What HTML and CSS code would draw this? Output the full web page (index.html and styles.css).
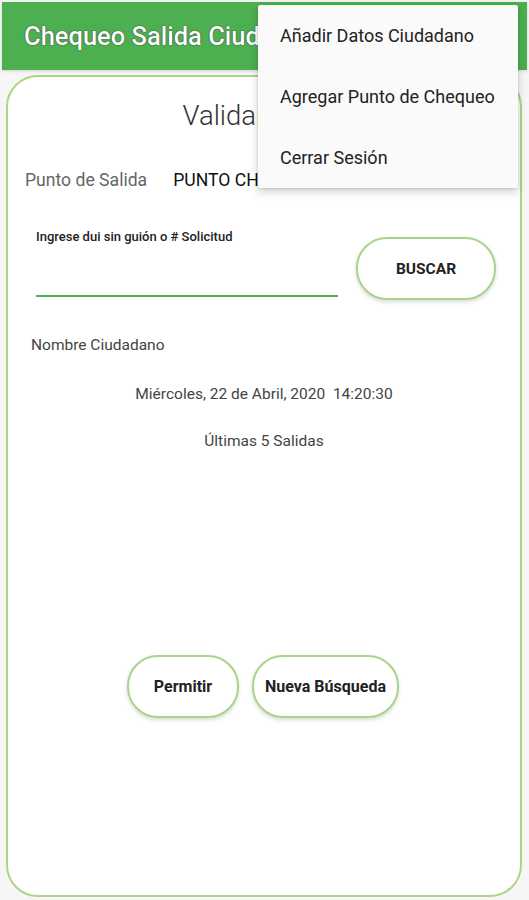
FILE: index.html
```html
<!DOCTYPE html>
<html lang="es">
<head>
  <meta charset="UTF-8" />
  <title>Chequeo Salida Ciudadano</title>
  <meta name="viewport" content="width=device-width, initial-scale=1.0" />
  <link rel="stylesheet" href="styles.css">
</head>
<body>
  <header class="app-bar">
    <h1 class="app-title">Chequeo Salida Ciudadano</h1>
  </header>

  <ul class="menu">
    <li>Añadir Datos Ciudadano</li>
    <li>Agregar Punto de Chequeo</li>
    <li>Cerrar Sesión</li>
  </ul>

  <main class="card">
    <h2 class="card-title">Validar Salida</h2>

    <div class="point-row">
      <span class="point-label">Punto de Salida</span>
      <span class="point-value">PUNTO CHEQUEO 1</span>
    </div>

    <div class="search-row">
      <div class="field">
        <label for="dui" class="field-label">Ingrese dui sin guión o # Solicitud</label>
        <input id="dui" class="field-input" type="text">
      </div>
      <button class="pill btn-search">BUSCAR</button>
    </div>

    <p class="citizen">Nombre Ciudadano</p>
    <p class="date">Miércoles, 22 de Abril, 2020&nbsp;&nbsp;14:20:30</p>
    <p class="last">Últimas 5 Salidas</p>

    <div class="actions">
      <button class="pill btn-allow">Permitir</button>
      <button class="pill btn-new">Nueva Búsqueda</button>
    </div>
  </main>
</body>
</html>
```

FILE: styles.css
```css
body {
  margin: 0;
  font-family: Roboto, 'Noto Sans', sans-serif;
  background: #f6f6f6;
  color: #333;
  position: relative;
  height: 900px;
  overflow: hidden;
}

.app-bar {
  margin: 2px 2px 0;
  height: 68px;
  background: #4caf50;
  display: flex;
  align-items: center;
  padding-left: 22px;
  box-shadow: 0 1px 3px rgba(0,0,0,0.15);
}

.app-title {
  margin: 0;
  color: #fff;
  font-size: 25.5px;
  font-weight: 500;
  white-space: nowrap;
  text-shadow: 0 0 1px #333, 0 0 1px #333;
}

/* overflow menu, open over the bar and the card */
.menu {
  position: absolute;
  top: 5px;
  left: 258px;
  width: 260px;
  margin: 0;
  padding: 0;
  list-style: none;
  background: #fafafa;
  box-shadow: 0 4px 10px rgba(0,0,0,0.18), 0 1px 3px rgba(0,0,0,0.12);
  border-radius: 2px;
  z-index: 2;
}

.menu li {
  height: 61px;
  line-height: 61px;
  padding-left: 22px;
  font-size: 18px;
  color: #222;
}

.card {
  box-sizing: border-box;
  margin: 5px 7px 0 6px;
  height: 822px;
  background: #fff;
  border: 2px solid #aed581;
  border-radius: 32px;
  padding-top: 23px;
}

.card-title {
  margin: 0;
  text-align: center;
  font-size: 27.5px;
  line-height: 32px;
  font-weight: 300;
  color: #333;
}

.point-row {
  margin-top: 38px;
  padding-left: 17px;
  display: flex;
  gap: 26px;
  font-size: 17.6px;
  line-height: 20px;
}

.point-label {
  color: #666;
}

.point-value {
  color: #111;
}

.search-row {
  margin-top: 39px;
  padding-left: 28px;
  display: flex;
  align-items: flex-start;
  gap: 18px;
}

.field {
  width: 302px;
  display: flex;
  flex-direction: column;
}

.field-label {
  font-size: 13px;
  line-height: 16px;
  font-weight: 500;
  color: #222;
}

.field-input {
  height: 50px;
  border: none;
  border-bottom: 2px solid #4caf50;
  outline: none;
  background: transparent;
  padding: 0;
}

.pill {
  background: #fff;
  border: 2px solid #a9d48a;
  border-radius: 31px;
  height: 63px;
  font-family: Roboto, 'Noto Sans', sans-serif;
  font-size: 16px;
  font-weight: 700;
  color: #222;
  box-shadow: 0 2px 4px rgba(0,0,0,0.15);
}

.btn-search {
  margin-top: 8px;
  width: 140px;
  font-size: 15.5px;
}

.citizen {
  margin: 35px 0 0;
  padding-left: 23px;
  font-size: 15.5px;
  line-height: 20px;
  color: #444;
}

.date, .last {
  margin: 29px 0 0;
  text-align: center;
  font-size: 15.5px;
  line-height: 20px;
  color: #444;
}

.last {
  margin-top: 27px;
}

.actions {
  margin-top: 204px;
  display: flex;
  justify-content: center;
  gap: 13px;
  margin-right: 2px;
}

.btn-allow {
  width: 112px;
}

.btn-new {
  width: 147px;
}
```
